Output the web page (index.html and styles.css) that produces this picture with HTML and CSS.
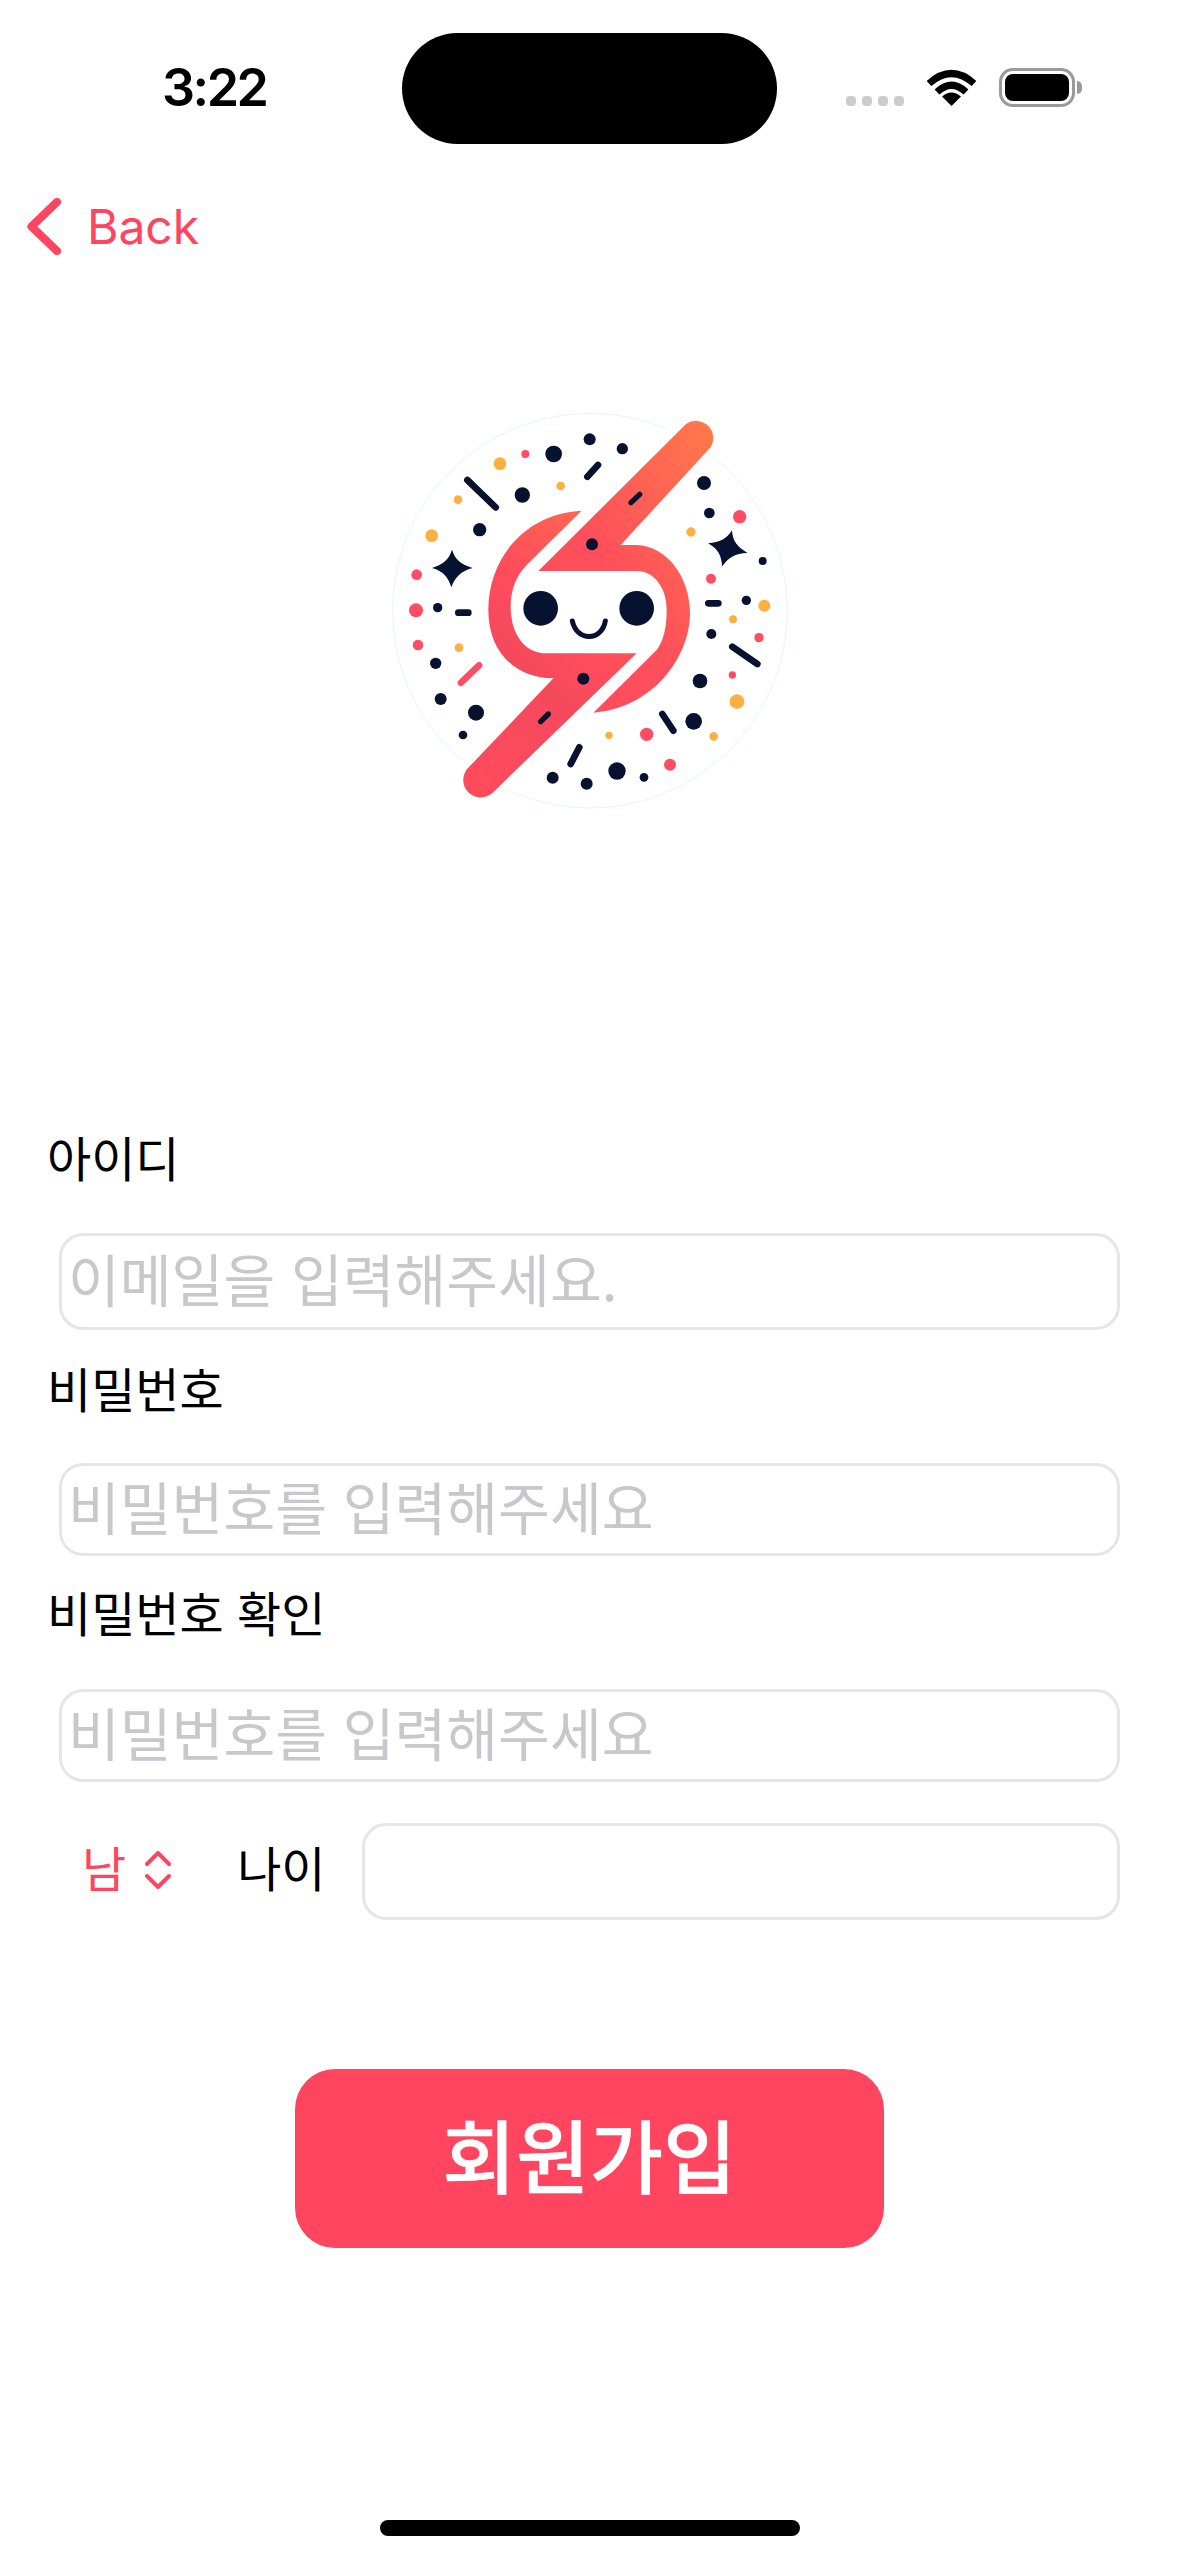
FILE: index.html
```html
<!DOCTYPE html>
<html lang="ko">
<head>
<meta charset="utf-8">
<title>회원가입</title>
<link rel="stylesheet" href="styles.css">
</head>
<body>
<main class="app">
  <header class="status">
    <span class="time">3:22</span>
    <div class="island"></div>
    <div class="signal"><i></i><i></i><i></i><i></i></div>
    <svg class="wifi" viewBox="0 0 51 37" aria-hidden="true">
      <path d="M3 14.500Q25.500 -5.500 48 14.500" fill="none" stroke="#000" stroke-width="7"/>
      <path d="M11 23Q25.500 9.500 40 23" fill="none" stroke="#000" stroke-width="7"/>
      <path d="M25.500 37L16 27.500Q25.500 19.500 35 27.500Z" fill="#000"/>
    </svg>
    <div class="battery"><div class="battery-fill"></div></div>
  </header>

  <nav class="nav">
    <svg class="back-icon" viewBox="0 0 34 57" aria-hidden="true">
      <path d="M30 4L4.500 28.500L30 53" fill="none" stroke="#ff4560" stroke-width="8" stroke-linecap="round" stroke-linejoin="round"/>
    </svg>
    <span class="back-text">Back</span>
  </nav>

  <div class="logo-wrap">
    <svg class="logo" viewBox="0 0 1320 1320" role="img" aria-label="logo">
      <defs>
        <linearGradient id="g2" x1="0" y1="1" x2="1" y2="0">
          <stop offset="0" stop-color="#ff4b5e"/>
          <stop offset=".45" stop-color="#ff4f5b"/>
          <stop offset="1" stop-color="#ff7a4a"/>
        </linearGradient>
        <linearGradient id="g3" x1=".2" y1="1" x2=".8" y2="0">
          <stop offset="0" stop-color="#ff4b5c"/>
          <stop offset=".4" stop-color="#f5495c"/>
          <stop offset=".6" stop-color="#ff4c5c"/>
          <stop offset="1" stop-color="#ff6a50"/>
        </linearGradient>
      </defs>
      <circle cx="660" cy="662" r="592" fill="none" stroke="#e9f4f9" stroke-width="3"/>
      <g class="halo">
        <path d="M948 102A52 52 0 0 1 1022 172L752 465H800C890 468 960 560 960 670C960 800 850 955 670 968L860 780Q890 740 890 660C890 590 850 543 800 543H505Z"/>
        <path d="M635 362L470 525Q422 575 422 650C422 720 455 790 530 790H800L368 1208A52 52 0 0 1 296 1132L550 865C440 865 355 790 355 660C355 500 470 370 635 362Z"/>
      </g>
      <path fill="url(#g2)" d="M948 102A52 52 0 0 1 1022 172L752 465H800C890 468 960 560 960 670C960 800 850 955 670 968L860 780Q890 740 890 660C890 590 850 543 800 543H505Z"/>
      <path fill="url(#g3)" d="M635 362L470 525Q422 575 422 650C422 720 455 790 530 790H800L368 1208A52 52 0 0 1 296 1132L550 865C440 865 355 790 355 660C355 500 470 370 635 362Z"/>
      <g fill="#071230">
        <circle cx="512" cy="655" r="52"/><circle cx="800" cy="655" r="52"/>
        <circle cx="659" cy="148" r="18"/><circle cx="757" cy="176" r="17"/><circle cx="551" cy="192" r="25"/>
        <circle cx="457" cy="315" r="23"/><circle cx="329" cy="419" r="20"/><circle cx="203" cy="653" r="14"/>
        <circle cx="197" cy="820" r="17"/><circle cx="212" cy="927" r="18"/><circle cx="318" cy="968" r="24"/>
        <circle cx="279" cy="1035" r="13"/><circle cx="548" cy="1163" r="18"/><circle cx="650" cy="1181" r="18"/>
        <circle cx="741" cy="1143" r="26"/><circle cx="822" cy="1162" r="13"/><circle cx="971" cy="994" r="25"/>
        <circle cx="990" cy="873" r="22"/><circle cx="1024" cy="732" r="15"/><circle cx="1129" cy="631" r="14"/>
        <circle cx="1178" cy="513" r="12"/><circle cx="1018" cy="369" r="16"/><circle cx="1002" cy="279" r="21"/>
        <circle cx="666" cy="463" r="18"/><circle cx="640" cy="866" r="18"/>
        <path transform="translate(246 536)" d="M0 -57C10 -26 26 -14 62 -2C26 8 10 24 -2 56C-12 24 -26 8 -60 -2C-26 -14 -10 -26 0 -57Z"/>
        <path transform="translate(1072 476) rotate(14)" d="M0 -57C10 -26 26 -14 62 -2C26 8 10 24 -2 56C-12 24 -26 8 -60 -2C-26 -14 -10 -26 0 -57Z"/>
      </g>
      <g fill="#fbb040">
        <circle cx="390" cy="221" r="19"/><circle cx="572" cy="288" r="13"/><circle cx="264" cy="329" r="13"/>
        <circle cx="185" cy="437" r="19"/><circle cx="267" cy="773" r="13"/><circle cx="963" cy="426" r="14"/>
        <circle cx="1183" cy="647" r="18"/><circle cx="1089" cy="688" r="12"/><circle cx="1101" cy="935" r="22"/>
        <circle cx="1031" cy="1039" r="13"/><circle cx="717" cy="1036" r="11"/>
      </g>
      <g fill="#ff4d63">
        <circle cx="466" cy="192" r="12"/><circle cx="140" cy="554" r="16"/><circle cx="138" cy="661" r="21"/>
        <circle cx="144" cy="765" r="16"/><circle cx="1109" cy="380" r="20"/><circle cx="1023" cy="566" r="15"/>
        <circle cx="1167" cy="743" r="14"/><circle cx="1087" cy="855" r="11"/><circle cx="830" cy="1033" r="20"/>
        <circle cx="900" cy="1124" r="18"/>
      </g>
      <g fill="none" stroke="#071230" stroke-linecap="round" stroke-width="20">
        <path d="M292 270L377 352"/><path d="M652 260L684 225"/><path d="M783 338L809 313" stroke-width="16"/>
        <path d="M1015 640H1045"/><path d="M265 668H295"/><path d="M1087 770L1162 822"/>
        <path d="M877 972L910 1022"/><path d="M628 1072L602 1122"/><path d="M512 995L535 972" stroke-width="16"/>
        <path d="M607 693C620 755 695 755 706 693" stroke-width="15"/>
      </g>
      <path d="M273 878L327 826" fill="none" stroke="#ff4d63" stroke-width="20" stroke-linecap="round"/>
    </svg>
  </div>

  <form class="form">
    <label class="label label-id" for="uid">아이디</label>
    <input class="field field-id" id="uid" type="text" placeholder="이메일을 입력해주세요.">
    <label class="label label-pw" for="pw">비밀번호</label>
    <input class="field field-pw" id="pw" type="text" placeholder="비밀번호를 입력해주세요">
    <label class="label label-confirm" for="pw2">비밀번호 확인</label>
    <input class="field field-confirm" id="pw2" type="text" placeholder="비밀번호를 입력해주세요">
    <div class="row">
      <div class="picker">
        <span class="picker-value">남</span>
        <svg class="picker-icon" viewBox="0 0 26 38" aria-hidden="true">
          <path d="M2 13L13 2L24 13M2 25L13 36L24 25" fill="none" stroke="#ff4560" stroke-width="4" stroke-linecap="round" stroke-linejoin="round"/>
        </svg>
      </div>
      <label class="age-label" for="age">나이</label>
      <input class="field field-age" id="age" type="text">
    </div>
    <button class="submit" type="button">회원가입</button>
  </form>

  <div class="home-bar"></div>
</main>
</body>
</html>
```
FILE: styles.css
```css
* { box-sizing: border-box; }
html, body { margin: 0; padding: 0; background: #fff; }
body { font-family: "Noto Sans CJK KR", "Inter", sans-serif; }

.app {
  width: 1179px;
  height: 2556px;
  display: flex;
  flex-direction: column;
  overflow: hidden;
  background: #fff;
}

/* status bar */
.status {
  display: flex;
  align-items: flex-start;
  height: 111px;
  margin-top: 33px;
  padding-left: 162px;
}
.time {
  width: 106px;
  margin-top: 29px;
  font: 600 52px/52px "Inter", sans-serif;
  letter-spacing: -2.5px;
  color: #000;
}
.island {
  width: 375px;
  height: 111px;
  margin-left: 134px;
  border-radius: 56px;
  background: #000;
}
.signal {
  display: flex;
  gap: 6px;
  margin: 63px 0 0 69px;
}
.signal i {
  width: 10px;
  height: 10px;
  border-radius: 4px;
  background: #ccc;
}
.wifi {
  width: 51px;
  height: 37px;
  margin: 36px 0 0 22px;
}
.battery {
  position: relative;
  width: 76px;
  height: 39px;
  margin: 35px 0 0 22px;
  padding: 3px;
  border: 3px solid #999;
  border-radius: 14px;
}
.battery::after {
  content: "";
  position: absolute;
  left: 75px;
  top: 10px;
  width: 5px;
  height: 13px;
  border-radius: 0 5px 5px 0;
  background: #999;
}
.battery-fill {
  width: 100%;
  height: 100%;
  border-radius: 8px;
  background: #000;
}

/* nav */
.nav {
  display: flex;
  align-items: center;
  height: 57px;
  margin-top: 54px;
  padding-left: 27px;
  color: #ff4560;
}
.back-icon { width: 34px; height: 57px; }
.back-text {
  margin-left: 26px;
  font: 400 48px/57px "Inter", sans-serif;
}

/* logo */
.logo-wrap {
  display: flex;
  justify-content: center;
  margin-top: 135px;
}
.logo { width: 440px; height: 440px; }
.halo { fill: #fff; stroke: #fff; stroke-width: 60; stroke-linejoin: round; }

/* form */
.form {
  display: flex;
  flex-direction: column;
  align-items: flex-start;
  margin-top: 300px;
}
.label {
  height: 60px;
  margin-left: 47px;
  font-size: 48px;
  line-height: 52px;
  color: #000;
}
.field {
  display: block;
  width: 1061px;
  margin-left: 59px;
  padding: 0 6px 8px;
  border: 3px solid #e5e5ea;
  border-radius: 24px;
  background: #fff;
  outline: none;
  font-family: inherit;
  font-size: 56.300px;
  color: #000;
}
.field::placeholder { color: #c7c7cc; opacity: 1; }
.field-id { height: 97px; margin-top: 43px; }
.label-pw { margin-top: 31px; }
.field-pw { height: 93px; margin-top: 42px; }
.label-confirm { margin-top: 29px; }
.field-confirm { height: 93px; margin-top: 44px; }

.row {
  display: flex;
  align-items: center;
  width: 1120px;
  height: 97px;
  margin-top: 41px;
}
.picker {
  display: flex;
  align-items: center;
  margin-left: 82px;
  color: #ff4560;
}
.picker-value { font-size: 48px; line-height: 52px; padding-bottom: 12px; }
.picker-icon { width: 26px; height: 38px; margin: 0 0 4px 19px; }
.age-label {
  margin-left: 66px;
  padding-bottom: 12px;
  font-size: 48px;
  line-height: 52px;
  color: #000;
}
.field-age { width: 758px; height: 97px; margin-left: 36px; }

.submit {
  width: 589px;
  height: 179px;
  margin: 149px 0 0 295px;
  padding: 0 0 14px;
  border: 0;
  border-radius: 40px;
  background: #ff4560;
  color: #fff;
  font-family: inherit;
  font-size: 80px;
  font-weight: 500;
  -webkit-text-stroke: 0.4px #fff;
  line-height: 1;
}

.home-bar {
  width: 420px;
  height: 16px;
  margin: 272px 0 0 380px;
  border-radius: 8px;
  background: #000;
}
```
